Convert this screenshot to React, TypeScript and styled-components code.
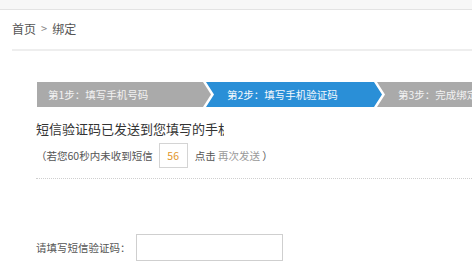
import React from "react";
import styled, { createGlobalStyle } from "styled-components";

const GlobalStyle = createGlobalStyle`
  html, body {
    margin: 0;
    padding: 0;
    background: #fff;
    font-family: "Noto Sans CJK SC", "Liberation Sans", sans-serif;
    color: #444;
  }
`;

const steps = ["第1步：填写手机号码", "第2步：填写手机验证码", "第3步：完成绑定"];

const App = (): JSX.Element => (
  <Page>
    <GlobalStyle />
    <TopBar />
    <Crumbs>
      首页<Sep>&gt;</Sep>绑定
    </Crumbs>
    <Rule />
    <Content>
      <Steps>
        {steps.map((s, i) => (
          <Step key={s} $first={i === 0} $active={i === 1} $last={i === steps.length - 1}>
            {s}
          </Step>
        ))}
      </Steps>
      <Message>短信验证码已发送到您填写的手机</Message>
      <Resend>
        （若您60秒内未收到短信
        <Counter>56</Counter>
        点击 <ResendLink>再次发送</ResendLink> ）
      </Resend>
      <Dotted />
      <Field>
        <Label>请填写短信验证码：</Label>
        <Input />
      </Field>
    </Content>
  </Page>
);

const Page = styled.div`
  width: 472px;
  height: 268px;
  overflow: hidden;
`;

const TopBar = styled.div`
  height: 9px;
  background: #f7f7f7;
  border-bottom: 1px solid #e3e3e3;
`;

const Crumbs = styled.div`
  height: 39px;
  padding-left: 12px;
  padding-bottom: 3px;
  box-sizing: border-box;
  display: flex;
  align-items: center;
  font-size: 12px;
  color: #555;
`;

const Sep = styled.span`
  margin: 0 5px;
  color: #888;
  font-size: 11px;
`;

const Rule = styled.div`
  margin-left: 12px;
  height: 2px;
  background: #eeeeee;
`;

const Content = styled.div`
  padding-left: 36px;
`;

const Steps = styled.div`
  display: flex;
  margin-top: 31px;
  margin-left: 1px;
  height: 25px;
`;

const Step = styled.div<{ $first: boolean; $active: boolean; $last: boolean }>`
  flex: 0 0 ${(p) => (p.$first ? 174 : 176)}px;
  margin-left: ${(p) => (p.$first ? 0 : -5)}px;
  padding-left: ${(p) => (p.$first ? 11 : 21)}px;
  box-sizing: border-box;
  display: flex;
  align-items: center;
  font-size: 10.5px;
  color: ${(p) => (p.$active ? "#f4f9fd" : "#f2f2f2")};
  background: ${(p) => (p.$active ? "#2a8fd7" : "#aaaaaa")};
  white-space: nowrap;
  clip-path: ${(p) =>
    p.$first
      ? "polygon(0 0, calc(100% - 8px) 0, 100% 50%, calc(100% - 8px) 100%, 0 100%)"
      : p.$last
      ? "polygon(0 0, 100% 0, 100% 100%, 0 100%, 8px 50%)"
      : "polygon(0 0, calc(100% - 8px) 0, 100% 50%, calc(100% - 8px) 100%, 0 100%, 8px 50%)"};
`;

const Message = styled.div`
  margin-top: 12px;
  width: 188px;
  overflow: hidden;
  white-space: nowrap;
  font-size: 13px;
  line-height: 20px;
  color: #333;
`;

const Resend = styled.div`
  margin-top: 4px;
  display: flex;
  align-items: center;
  height: 25px;
  font-size: 10.5px;
  color: #555;
  white-space: pre;
`;

const Counter = styled.span`
  box-sizing: border-box;
  width: 29px;
  height: 25px;
  margin: 0 7px 0 6px;
  border: 1px solid #d4d4d4;
  display: flex;
  align-items: center;
  justify-content: center;
  color: #e2962a;
  font-size: 10.5px;
`;

const ResendLink = styled.span`
  color: #9a9a9a;
`;

const Dotted = styled.div`
  margin-top: 10px;
  border-top: 1px dotted #cfcfcf;
`;

const Field = styled.div`
  margin-top: 55px;
  display: flex;
  align-items: center;
`;

const Label = styled.div`
  width: 100px;
  font-size: 10.5px;
  color: #555;
`;

const Input = styled.input`
  box-sizing: border-box;
  width: 147px;
  height: 27px;
  border: 1px solid #cfcfcf;
  outline: none;
  padding: 0 4px;
`;

export default App;
